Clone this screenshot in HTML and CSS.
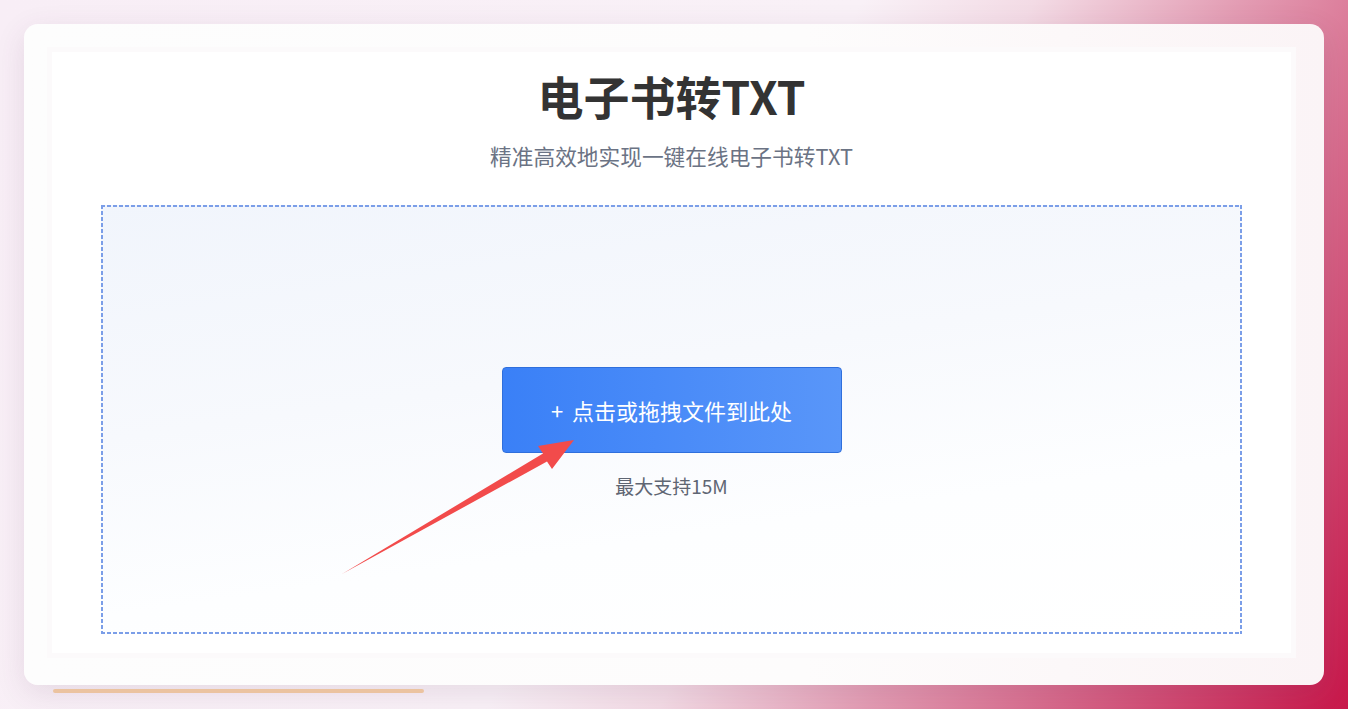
FILE: index.html
```html
<!DOCTYPE html>
<html lang="zh-CN">
<head>
  <meta charset="UTF-8" />
  <meta name="viewport" content="width=device-width, initial-scale=1.0"/>
  <title>电子书转TXT</title>
  <link rel="stylesheet" href="styles.css">
</head>
<body>
  <div class="card">
    <div class="panel">
      <h1 class="title">电子书转TXT</h1>
      <p class="sub">精准高效地实现一键在线电子书转TXT</p>

      <div class="drop">
        <button class="upload-btn"><span class="plus">+</span>点击或拖拽文件到此处</button>
        <p class="limit">最大支持15M</p>

        <svg class="arrow" width="1141" height="429" viewBox="0 0 1141 429">
          <polygon points="241,369 442,248.5 437,241 473,235 451,264 446,256.5" fill="#f24b4b"/>
        </svg>
      </div>
    </div>
  </div>
  <div class="progress"></div>
</body>
</html>
```

FILE: styles.css
```css
* {
  box-sizing: border-box;
}

html, body {
  margin: 0;
  height: 100%;
}

body {
  font-family: "Noto Sans CJK SC", "Noto Sans", sans-serif;
  padding: 24px;
  background: linear-gradient(118deg, #f8eef6 0%, #f9f1f7 50%, #f3dbe5 60%, #e39cb3 72%, #d45a7f 86%, #c8174a 100%);
  overflow: hidden;
}

.card {
  height: 661px;
  background: linear-gradient(90deg, #fdfdfd 0%, #fdfcfc 60%, #fbf4f6 100%);
  border-radius: 14px;
  padding: 23px 28px 27px 23px;
  box-shadow: 0 8px 30px rgba(90, 50, 90, 0.12);
}

.panel {
  height: 100%;
  background: #fff;
  border: 5px solid #fcfafb;
  padding: 0 49px;
  text-align: center;
}

.title {
  margin: 13px 0 0;
  font-size: 46px;
  line-height: 60px;
  font-weight: bold;
  color: #333;
}

.sub {
  margin: 16px 0 0;
  font-size: 21.7px;
  line-height: 30px;
  color: #6b7384;
}

/* dashed edge drawn with gradients so the dashes are 4px on / 2px off */
.drop {
  position: relative;
  height: 429px;
  margin-top: 34px;
  padding-top: 162px;
  background:
    repeating-linear-gradient(90deg, #7b9ee8 0 4px, transparent 4px 6px) top / 100% 2px no-repeat,
    repeating-linear-gradient(90deg, #7b9ee8 0 4px, transparent 4px 6px) bottom / 100% 2px no-repeat,
    repeating-linear-gradient(180deg, #7b9ee8 0 4px, transparent 4px 6px) left / 2px 100% no-repeat,
    repeating-linear-gradient(180deg, #7b9ee8 0 4px, transparent 4px 6px) right / 2px 100% no-repeat,
    linear-gradient(172deg, #f1f5fc 0%, #f7f9fd 40%, #fdfeff 70%, #ffffff 100%);
}

.upload-btn {
  width: 340px;
  height: 86px;
  border: 1px solid #2f6fdc;
  border-radius: 4px;
  background: linear-gradient(90deg, #3a80f7 0%, #5996f9 100%);
  color: #fff;
  font-family: inherit;
  font-size: 22px;
  cursor: pointer;
}

.plus {
  margin-right: 9px;
}

.limit {
  margin: 19px 0 0;
  font-size: 19px;
  line-height: 27px;
  color: #5f6673;
}

.arrow {
  position: absolute;
  left: 0;
  top: 0;
  pointer-events: none;
}

.progress {
  width: 371px;
  height: 4px;
  margin: 4px 0 0 29px;
  background: #ebc3a0;
  border-radius: 2px;
}
```
